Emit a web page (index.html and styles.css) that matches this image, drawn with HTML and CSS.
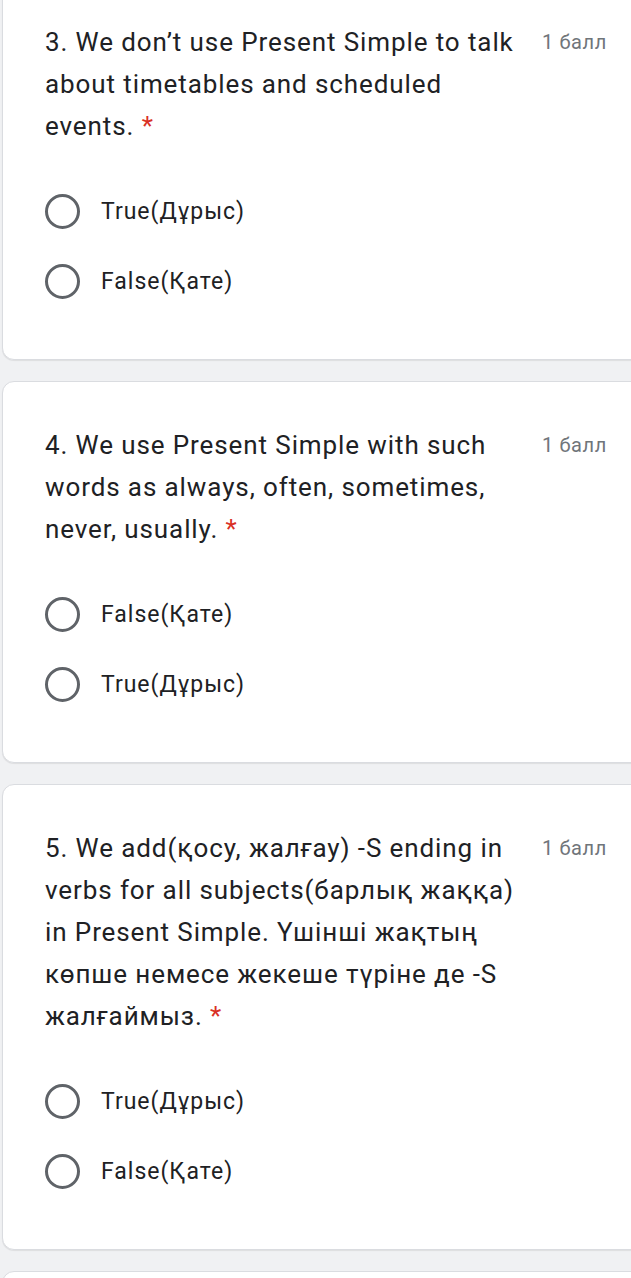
FILE: index.html
```html
<!DOCTYPE html>
<html>
<head>
<meta charset="utf-8">
<link rel="stylesheet" href="styles.css">
</head>
<body>
<div class="page">
  <div class="card first">
    <div class="head">
      <div class="q">3. We don’t use Present Simple to talk about timetables and scheduled events. <span class="req">*</span></div>
      <div class="pts">1 балл</div>
    </div>
    <div class="opts">
      <div class="opt"><span class="radio"></span><span class="lbl">True(Дұрыс)</span></div>
      <div class="opt"><span class="radio"></span><span class="lbl">False(Қате)</span></div>
    </div>
  </div>
  <div class="card">
    <div class="head">
      <div class="q">4. We use Present Simple with such words as always, often, sometimes, never, usually. <span class="req">*</span></div>
      <div class="pts">1 балл</div>
    </div>
    <div class="opts">
      <div class="opt"><span class="radio"></span><span class="lbl">False(Қате)</span></div>
      <div class="opt"><span class="radio"></span><span class="lbl">True(Дұрыс)</span></div>
    </div>
  </div>
  <div class="card">
    <div class="head">
      <div class="q">5. We add(қосу, жалғау) -S ending in verbs for all subjects(барлық жаққа) in Present Simple. Үшінші жақтың көпше немесе жекеше түріне де -S жалғаймыз. <span class="req">*</span></div>
      <div class="pts">1 балл</div>
    </div>
    <div class="opts">
      <div class="opt"><span class="radio"></span><span class="lbl">True(Дұрыс)</span></div>
      <div class="opt"><span class="radio"></span><span class="lbl">False(Қате)</span></div>
    </div>
  </div>
  <div class="card last"></div>
</div>
</body>
</html>
```
FILE: styles.css
```css
html, body {
  margin: 0;
  padding: 0;
  background: #f0f1f3;
  overflow: hidden;
  height: 1278px;
}
.page {
  display: flex;
  flex-direction: column;
  gap: 21px;
  padding-left: 2px;
  margin-top: -22px;
  font-family: Roboto, "Noto Sans", sans-serif;
}
.card {
  width: 680px;
  box-sizing: border-box;
  background: #fff;
  border: 1.5px solid #dadce0;
  border-radius: 12px;
  padding: 42px 0 60px 42px;
  box-shadow: 0 1px 1px rgba(0,0,0,0.08);
}
.head {
  display: flex;
  align-items: flex-start;
}
.q {
  width: 482px;
  flex: none;
  font-size: 26px;
  letter-spacing: 0.9px;
  line-height: 42px;
  color: #202124;
}
.req {
  color: #d93025;
}
.pts {
  flex: none;
  margin-left: 15px;
  font-size: 20px;
  letter-spacing: 0.6px;
  line-height: 42px;
  color: #70757a;
}
.opts {
  display: flex;
  flex-direction: column;
  gap: 35px;
  margin-top: 47px;
}
.opt {
  display: flex;
  align-items: center;
  height: 35px;
}
.radio {
  width: 35px;
  height: 35px;
  box-sizing: border-box;
  border: 3.5px solid #5f6368;
  border-radius: 50%;
  flex: none;
}
.lbl {
  margin-left: 21px;
  font-size: 23px;
  letter-spacing: 1px;
  color: #202124;
}
.last {
  height: 60px;
  padding: 0;
}
```
